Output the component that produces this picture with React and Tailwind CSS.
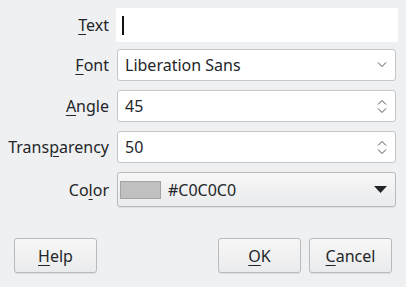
import React from 'react';

const FONT = { fontFamily: '"Noto Sans", "Open Sans", sans-serif' };

function Mn({ children }) {
  return <span className="underline underline-offset-[3px] decoration-1">{children}</span>;
}

function Chevron({ up }) {
  return (
    <svg width="10" height="6" viewBox="0 0 10 6" className="block">
      <path
        d={up ? 'M1 5.5 L5 1.5 L9 5.5' : 'M1 0.5 L5 4.5 L9 0.5'}
        fill="none"
        stroke="#4d4f52"
        strokeWidth="1"
      />
    </svg>
  );
}

function Row({ label, children, className }) {
  return (
    <div className={`flex items-center ${className || ''}`}>
      <div className="w-[109px] text-right shrink-0">{label}</div>
      {children}
    </div>
  );
}

function Field({ value, right }) {
  return (
    <div className="ml-[8px] w-[279px] h-[32px] bg-white border border-[#c4c6c8] rounded-[3px] flex items-center pl-[7px] pr-[8px]">
      <span className="flex-1">{value}</span>
      {right}
    </div>
  );
}

function Btn({ children, className }) {
  return (
    <button
      type="button"
      className={`h-[35px] w-[83px] rounded-[3px] border border-[#b8babc] bg-gradient-to-b from-[#f7f7f8] to-[#eaebec] shadow-[0_1px_0_rgba(0,0,0,0.08)] flex items-center justify-center ${className || ''}`}
    >
      {children}
    </button>
  );
}

export default function App() {
  return (
    <div className="w-[406px] h-[287px] bg-[#eff0f1] text-[#232629] text-[16px] leading-[22px] overflow-hidden" style={FONT}>
      <div className="pt-[8px]">
        <Row label={<><Mn>T</Mn>ext</>}>
          <div className="ml-[7px] w-[282px] h-[34px] bg-white flex items-center pl-[6px]">
            <div className="w-[2px] h-[19px] bg-[#111]" />
          </div>
        </Row>
        <Row label={<><Mn>F</Mn>ont</>} className="mt-[7px]">
          <Field value="Liberation Sans" right={<Chevron />} />
        </Row>
        <Row label={<><Mn>A</Mn>ngle</>} className="mt-[9px]">
          <Field
            value="45"
            right={
              <div className="flex flex-col gap-[3px]">
                <Chevron up />
                <Chevron />
              </div>
            }
          />
        </Row>
        <Row label={<>Trans<Mn>p</Mn>arency</>} className="mt-[9px]">
          <Field
            value="50"
            right={
              <div className="flex flex-col gap-[3px]">
                <Chevron up />
                <Chevron />
              </div>
            }
          />
        </Row>
        <Row label={<>Co<Mn>l</Mn>or</>} className="mt-[9px]">
          <div className="ml-[8px] w-[279px] h-[35px] rounded-[3px] border border-[#b8babc] bg-gradient-to-b from-[#f7f7f8] to-[#eaebec] shadow-[0_1px_0_rgba(0,0,0,0.08)] flex items-center pl-[2px] pr-[8px]">
            <div className="w-[41px] h-[18px] bg-[#c0c0c0] border border-[#a3a3a3]" />
            <span className="ml-[7px] flex-1">#C0C0C0</span>
            <svg width="13" height="7" viewBox="0 0 13 7">
              <path d="M0 0 H13 L6.5 7 Z" fill="#232629" />
            </svg>
          </div>
        </Row>
      </div>
      <div className="flex items-center mt-[31px] pl-[14px]">
        <Btn><Mn>H</Mn>elp</Btn>
        <div className="flex-1" />
        <Btn><Mn>O</Mn>K</Btn>
        <Btn className="ml-[8px] mr-[14px]"><Mn>C</Mn>ancel</Btn>
      </div>
    </div>
  );
}
